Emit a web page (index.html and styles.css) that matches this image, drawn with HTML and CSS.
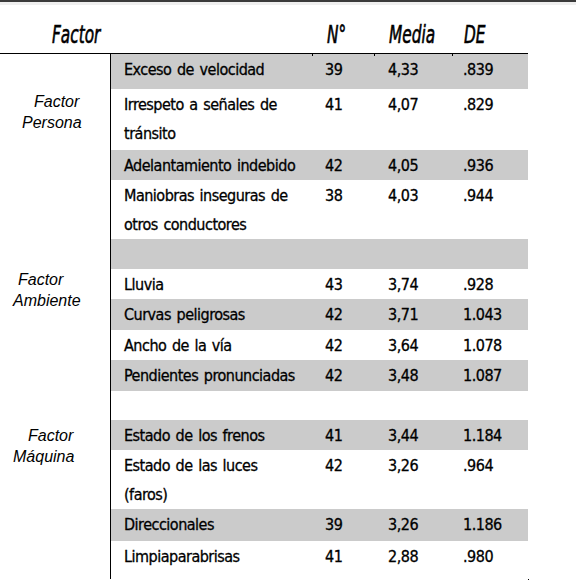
FILE: index.html
```html
<!DOCTYPE html>
<html lang="es">
<head>
<meta charset="utf-8">
<link rel="stylesheet" href="styles.css">
</head>
<body>
<div class="topbar"></div>
<table class="tbl">
  <colgroup>
    <col class="c1"><col class="c2"><col class="c3"><col class="c4"><col class="c5">
  </colgroup>
  <thead>
    <tr>
      <th class="hfactor"><span class="hx">Factor</span></th>
      <th></th>
      <th class="tick hn"><span class="hx">N°</span></th>
      <th class="tick hm"><span class="hx">Media</span></th>
      <th class="tick hd"><span class="hx">DE</span></th>
    </tr>
  </thead>
  <tbody>
    <tr class="g r35"><td class="side"></td><td class="it">Exceso de velocidad</td><td class="n">39</td><td class="m">4,33</td><td class="d">.839</td></tr>
    <tr class="r61"><td class="side lab lp" rowspan="3"><span class="l1">Factor</span><span class="l2">Persona</span></td><td class="it">Irrespeto a señales de<br>tránsito</td><td class="n">41</td><td class="m">4,07</td><td class="d">.829</td></tr>
    <tr class="g r30"><td class="it">Adelantamiento indebido</td><td class="n">42</td><td class="m">4,05</td><td class="d">.936</td></tr>
    <tr class="r59"><td class="it">Maniobras inseguras de<br>otros conductores</td><td class="n">38</td><td class="m">4,03</td><td class="d">.944</td></tr>
    <tr class="g r30"><td class="side"></td><td class="it"></td><td class="n"></td><td class="m"></td><td class="d"></td></tr>
    <tr class="r30"><td class="side lab la" rowspan="4"><span class="l1">Factor</span><span class="l2">Ambiente</span></td><td class="it">Lluvia</td><td class="n">43</td><td class="m">3,74</td><td class="d">.928</td></tr>
    <tr class="g r31"><td class="it">Curvas peligrosas</td><td class="n">42</td><td class="m">3,71</td><td class="d">1.043</td></tr>
    <tr class="r28"><td class="it">Ancho de la vía</td><td class="n">42</td><td class="m">3,64</td><td class="d">1.078</td></tr>
    <tr class="g r31"><td class="it">Pendientes pronunciadas</td><td class="n">42</td><td class="m">3,48</td><td class="d">1.087</td></tr>
    <tr class="r29"><td class="side"></td><td class="it"></td><td class="n"></td><td class="m"></td><td class="d"></td></tr>
    <tr class="g r30"><td class="side lab lm" rowspan="4"><span class="l1">Factor</span><span class="l2">Máquina</span></td><td class="it">Estado de los frenos</td><td class="n">41</td><td class="m">3,44</td><td class="d">1.184</td></tr>
    <tr class="r57"><td class="it">Estado de las luces<br>(faros)</td><td class="n">42</td><td class="m">3,26</td><td class="d">.964</td></tr>
    <tr class="g r32"><td class="it">Direccionales</td><td class="n">39</td><td class="m">3,26</td><td class="d">1.186</td></tr>
    <tr class="r38"><td class="it">Limpiaparabrisas</td><td class="n">41</td><td class="m">2,88</td><td class="d">.980</td></tr>
  </tbody>
</table>
<div class="endtick"></div>
</body>
</html>
```
FILE: styles.css
```css
html, body {
  margin: 0;
  padding: 0;
  background: #ffffff;
}
body {
  width: 588px;
  height: 580px;
  overflow: hidden;
  color: #000;
}
.topbar {
  width: 576px;
  height: 2px;
  background: #3a3a3a;
  border-bottom: 3px solid #efefef;
}
.tbl {
  border-collapse: separate;
  border-spacing: 0;
  table-layout: fixed;
  width: 528px;
  font-family: "DejaVu Sans Condensed", "DejaVu Sans", sans-serif;
}
.c1 { width: 111px; }
.c2 { width: 201px; }
.c3 { width: 62px; }
.c4 { width: 78px; }
.c5 { width: 76px; }

.tbl th {
  height: 42px;
  padding: 0 0 6px 0;
  border-bottom: 1px solid #000;
  vertical-align: bottom;
  text-align: left;
  font-weight: normal;
  font-style: oblique;
  font-size: 24px;
  line-height: 24px;
  position: relative;
  white-space: nowrap;
  -webkit-text-stroke: 0.6px #000;
}
.hx {
  display: inline-block;
  transform: scaleX(0.71);
  transform-origin: left bottom;
}
.hfactor { padding-left: 52px !important; }
.hn { padding-left: 15px !important; }
.hm { padding-left: 15px !important; }
.hd { padding-left: 12px !important; }
.tick::before {
  content: "";
  position: absolute;
  left: 0;
  bottom: -3px;
  width: 1px;
  height: 3px;
  background: #000;
}

.tbl td {
  padding: 1px 0 0 0;
  vertical-align: top;
  font-size: 16px;
  line-height: 29px;
  letter-spacing: -0.5px;
  white-space: nowrap;
  -webkit-text-stroke: 0.3px #000;
}
.tbl tr.g td.it,
.tbl tr.g td.n,
.tbl tr.g td.m,
.tbl tr.g td.d {
  background: #cbcbcb;
}
.tbl td.side {
  border-right: 1px solid #000;
  background: #fff;
}
.it { padding-left: 13px !important; word-spacing: 1.5px; }
.n { padding-left: 13px !important; }
.m { padding-left: 14px !important; }
.d { padding-left: 11px !important; }

.r28 { height: 28px; }
.r29 { height: 29px; }
.r30 { height: 30px; }
.r31 { height: 31px; }
.r32 { height: 32px; }
.r35 { height: 35px; }
.r38 { height: 38px; }
.r57 { height: 57px; }
.r59 { height: 59px; }
.r61 { height: 61px; }

.tbl td.lab {
  font-family: "Liberation Sans", Arial, sans-serif;
  font-style: italic;
  font-size: 16px;
  line-height: 21px;
  letter-spacing: 0;
  -webkit-text-stroke: 0;
}
.lab span { display: block; }
.lp { padding-top: 2px !important; }
.lp .l1 { padding-left: 34px; }
.lp .l2 { padding-left: 22px; }
.la { padding-top: 0 !important; }
.la .l1 { padding-left: 18px; }
.la .l2 { padding-left: 13px; }
.lm { padding-top: 5px !important; }
.lm .l1 { padding-left: 28px; }
.lm .l2 { padding-left: 13px; }

.endtick {
  margin-left: 528px;
  width: 1px;
  height: 4px;
  background: #000;
}
```
